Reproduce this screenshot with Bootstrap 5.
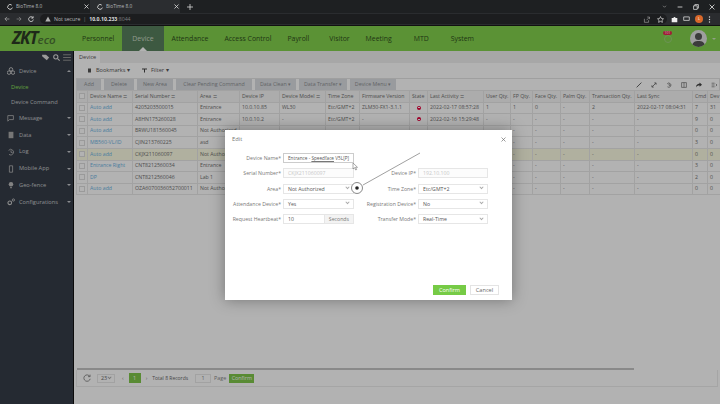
<!doctype html>
<html lang="en"><head><meta charset="utf-8"><title>BioTime 8.0</title>
<link rel="stylesheet" href="https://cdn.jsdelivr.net/npm/bootstrap@5.3.0/dist/css/bootstrap.min.css">
<style>
html,body{width:720px;height:404px;overflow:hidden;margin:0}
body{font-family:"Open Sans","Liberation Sans",sans-serif;font-size:5.6px;color:#555;background:#fff;position:relative;line-height:1.2}
.tabstrip{height:13px;background:#1e2022;color:#b5b7b9}
.browsertab{width:90px;height:13px;padding:0 1px 0 7px;font-size:4.8px;gap:3px}
.browsertab.on{background:#2b2d30}
.tabplus{margin-left:7px}
.urlbar{height:13px;background:#2a2c2f;color:#b8babc;border-bottom:1px solid #111}
.navbtns{width:40px;padding-left:4px;gap:6px;flex:none}
.omni{width:627px;height:10px;background:#1c1d1f;border-radius:5px;padding:0 3px 0 5px;font-size:5.2px;gap:3px;flex:none}
.omni b{color:#dedede;font-weight:700}
.omni i{font-style:normal;color:#7c7e80}
.ext{padding-left:4px;gap:5px}
.avatar-l{width:8px;height:8px;border-radius:50%;background:#d9682a;color:#fff;font-size:4px;line-height:8px;text-align:center}
.winctl{gap:10px;padding-right:5px}
.topnav{height:25px;background:#83d14c;color:#2e4f1e;font-size:6.9px}
.brand-box{width:74px;padding-left:12px;font-size:17px;font-weight:700;font-style:italic;color:#2c3b24;letter-spacing:-1px;line-height:25px;flex:none}
.brand-box em{font-size:11.5px;font-weight:600;letter-spacing:0;color:#4d7436}
.navitem{height:25px;line-height:25px;padding:0 8px;position:relative}
.navitem.act{background:#58805e;color:#d0dcca;padding:0 10px}
.navitem.act:after{content:"";position:absolute;left:50%;margin-left:-4px;bottom:0;border:4px solid transparent;border-top:0;border-bottom-color:#fff}
.sp1{width:4px}.sp2{width:6px}.sp3{width:2px}
.bellbox{position:relative;width:8px;height:8px;margin-right:18px;border:1.5px solid #9bd37a;border-radius:50%}
.bellbadge{position:absolute;left:-2px;top:-5px;background:#e8274e;color:#fff;font-size:3.5px;border-radius:3px;padding:0 1.5px}
.face{width:17px;height:17px;border-radius:50%;background:#e3e3e3;overflow:hidden;margin-right:5px}
.caretw{width:0;height:0;border:2px solid transparent;border-top-color:#cde6bd;margin-right:4px;margin-top:2px}
.shell{height:353px}
.sidebar{width:74px;background:#363d48;color:#c6c9cd;border-right:1px solid #111;flex:none;font-size:5.7px}
.sidetools{height:12px;padding-right:2px;gap:3px}
.sideitem{height:16.8px;padding-left:7px;gap:4px}
.sideitem svg{flex:none}
.sideitem span{flex:1}
.subitem{height:15px;padding-left:11px}
.subitem.on{color:#8fe05a}
.arrowd{width:0;height:0;border:2.3px solid transparent;border-top-color:#c6c9cd;margin:2px 2px 0 0}
.arrowu{width:0;height:0;border:2.3px solid transparent;border-bottom-color:#c6c9cd;margin:-2px 2px 0 0}
.mainarea{flex:1;min-width:0;background:#fff;overflow:hidden}
.crumbbar{height:12px;background:#f0f0f0}
.crumb{background:#fff;width:26px;height:12px;line-height:12px;padding-left:5px;font-size:5.6px}
.marks{height:15px;padding-left:13px;gap:12px;color:#555}
.tools{margin:0 0 0 2px;height:12px;border:1px solid #e4e4e4;border-width:1px 1px 0 1px}
.toolbtn{background:#dcdfe3;height:11px;line-height:11px;text-align:center;margin-right:3px;color:#8c8f92;font-size:5.3px;white-space:nowrap;flex:none}
.b1{width:24px}.b2{width:30px}.b3{width:36px}.b4{width:76px}.b5{width:41px}.b6{width:48px}.b7{width:46px}
.toolicons{margin-left:auto;gap:9px;padding-right:2px}
.gridbox{width:700px;margin-left:2px}
table.dtable{table-layout:fixed;width:648px;margin:0;font-size:5.2px;border-collapse:collapse}
.dtable th,.dtable td{height:11.6px;padding:0 2px;border:1px solid #e8e8e8;white-space:nowrap;overflow:hidden;font-weight:400;color:#707070;background:#fff;vertical-align:middle;line-height:1}
.dtable th{background:#f6f6f6;color:#707070}
.dtable a{color:#6cb4e4;text-decoration:none}
.dtable .hi td{background:#fdfde4}
.srt{color:#aaa}
.ck{display:block;width:6px;height:6px;margin:auto;border:1px solid #ddd;background:#fff}
.stop{display:block;width:4px;height:4px;border-radius:50%;background:#e5003d;margin:auto;position:relative}
.stop:after{content:"";position:absolute;left:1px;top:1.6px;width:2px;height:.8px;background:#fff}
.c1{width:11px}.c2{width:45px}.c3{width:65px}.c4{width:42px}.c5{width:40px}.c6{width:46px}.c7{width:34px}.c8{width:50px}.c9{width:18px}.c10{width:56px}.c11{width:27px}.c12{width:22px}.c13{width:28px}.c14{width:29px}.c15{width:45px}.c16{width:58px}.c17{width:15px}.c18{width:17px}
.spacer{height:173px}
.scrollline{height:2px;width:557px;margin-left:3px;background:#c4c4c4}
.pager{height:17px;width:642px;margin-left:2px;border:1px solid #ededed;border-top:0;padding-left:6px;font-size:5.4px;color:#888}
.sel23{width:18px;height:9px;border:1px solid #e8e8e8;margin:0 7px 0 6px;padding:0 3px;color:#666}
.page1{width:12px;height:10px;line-height:10px;text-align:center;color:#fff;background:#80c84b;margin:0 5px}
.totalrec{margin-left:5px;font-size:5px;color:#666}
.pginput{width:16px;height:9px;line-height:7px;border:1px solid #e8e8e8;text-align:center;margin:0 3px 0 7px}
.pgconfirm{background:#80c84b;color:#fff;width:25px;height:9px;line-height:9px;text-align:center;margin-left:3px}
.dim{position:absolute;left:0;right:0;top:26px;bottom:0;background:rgba(0,0,0,.3)}
.editbox{position:absolute;left:225px;top:130px;width:287px;height:170px;background:#fff;box-shadow:0 0 14px rgba(0,0,0,.35);display:flex;flex-direction:column;color:#666}
.edithead{height:18px;padding:0 6px 0 7px;font-size:5.8px;color:#777}
.fieldgrid{display:grid;grid-template-columns:58px 71px 64px 70px;row-gap:5.3px;padding:5px 0 0 0;font-size:5.2px}
.flabel{text-align:right;padding-right:2px;line-height:10px;white-space:nowrap;color:#777}
.fctl{height:10px;border:1px solid #e6e6e6;padding:0 4px;color:#555;background:#fff;display:flex;align-items:center;justify-content:space-between;white-space:nowrap;overflow:hidden;line-height:8px}
.fctl.focusx{border-color:#ccc;font-size:4.7px}
.fctl.off{background:#fcfcfc;color:#c8c8c8}
.fctl u{text-decoration-color:#777;text-underline-offset:1px}
.chev{width:3px;height:3px;border:solid #aaa;border-width:0 1px 1px 0;transform:rotate(45deg) translate(-1px,-1px)}
.unit{background:#f3f3f3;border-left:1px solid #e6e6e6;margin-right:-4px;height:8px;padding:0 4px;color:#777;line-height:8px}
.editfoot{margin-top:auto;height:17px;padding-right:13px;gap:4px;padding-bottom:3px}
.okbtn{width:33px;height:10px;line-height:10px;text-align:center;background:#76cb46;color:#fff;font-size:5.6px}
.nobtn{width:29px;height:10px;line-height:8px;text-align:center;border:1px solid #e4e4e4;color:#666;font-size:5.6px}
.annot{position:absolute;left:0;top:0;width:720px;height:404px;pointer-events:none}
</style></head><body>
<div class="tabstrip d-flex align-items-center">
 <div class="browsertab d-flex align-items-center"><svg width="6" height="6" viewBox="0 0 10 10"><path d="M8 2A4 4 0 1 0 9 6" fill="none" stroke="#ccc" stroke-width="1.6"/></svg><span class="flex-grow-1">BioTime 8.0</span><svg width="5" height="5" viewBox="0 0 10 10"><path d="M1 1l8 8M9 1l-8 8" stroke="#ddd" stroke-width="1.6"/></svg></div>
 <div class="browsertab on d-flex align-items-center"><svg width="6" height="6" viewBox="0 0 10 10"><path d="M8 2A4 4 0 1 0 9 6" fill="none" stroke="#ccc" stroke-width="1.6"/></svg><span class="flex-grow-1">BioTime 8.0</span><svg width="5" height="5" viewBox="0 0 10 10"><path d="M1 1l8 8M9 1l-8 8" stroke="#ddd" stroke-width="1.6"/></svg></div>
 <svg class="tabplus" width="6" height="6" viewBox="0 0 10 10"><path d="M5 0v10M0 5h10" stroke="#ddd" stroke-width="1.3"/></svg>
 <div class="winctl ms-auto d-flex align-items-center">
  <svg width="5" height="5" viewBox="0 0 10 10"><path d="M2 3.5l3 3 3-3" fill="none" stroke="#aaa" stroke-width="1.2"/></svg>
  <svg width="6" height="6" viewBox="0 0 10 10"><path d="M1 5h8" stroke="#ddd" stroke-width="1.4"/></svg>
  <svg width="6" height="6" viewBox="0 0 10 10"><path d="M1 3h6v6H1zM3 3V1h6v6H7" fill="none" stroke="#ddd" stroke-width="1.3"/></svg>
  <svg width="6" height="6" viewBox="0 0 10 10"><path d="M1 1l8 8M9 1l-8 8" stroke="#ddd" stroke-width="1.4"/></svg>
 </div>
</div>
<div class="urlbar d-flex align-items-center">
 <div class="navbtns d-flex align-items-center">
  <svg width="6" height="6" viewBox="0 0 10 10"><path d="M9 5H1.5M5 1.5L1.5 5 5 8.5" fill="none" stroke="#aaa" stroke-width="1.2"/></svg>
  <svg width="6" height="6" viewBox="0 0 10 10"><path d="M1 5h7.5M5 1.5L8.5 5 5 8.5" fill="none" stroke="#888" stroke-width="1.2"/></svg>
  <svg width="6" height="6" viewBox="0 0 10 10"><path d="M8 2.5A4 4 0 1 0 9 6M8.5 .5v3h-3" fill="none" stroke="#ddd" stroke-width="1.4"/></svg>
 </div>
 <div class="omni d-flex align-items-center"><svg width="6" height="6" viewBox="0 0 10 10"><path d="M5 1l4.5 8h-9z" fill="#b0b0b0"/></svg><span>Not secure</span><i>|</i><span><b>10.0.10.233</b><i>:8044</i></span>
  <svg class="ms-auto" width="7" height="7" viewBox="0 0 10 10"><path d="M2 4v5h6V6M5 6l4-4M6 1.5h3.3v3" fill="none" stroke="#999" stroke-width="1"/></svg>
  <svg class="ms-1" width="7" height="7" viewBox="0 0 10 10"><path d="M5 .8l1.3 2.8 3 .4-2.2 2.1.6 3L5 7.6 2.300 9.100l.6-3L.7 4l3-.4z" fill="none" stroke="#ddd" stroke-width="1"/></svg>
 </div>
 <div class="ext d-flex align-items-center">
  <svg width="7" height="7" viewBox="0 0 10 10"><path d="M1 3h2.500a1.500 1.500 0 0 1 3 0H9v6H1z" fill="#eee"/></svg>
  <svg width="7" height="6" viewBox="0 0 10 8"><path d="M1 1h8v5H1z" fill="none" stroke="#ccc" stroke-width="1.200"/></svg>
  <span class="avatar-l">L</span>
  <svg width="3" height="7" viewBox="0 0 3 10"><circle cx="1.500" cy="1.500" r="1" fill="#ddd"/><circle cx="1.500" cy="5" r="1" fill="#ddd"/><circle cx="1.500" cy="8.500" r="1" fill="#ddd"/></svg>
 </div>
</div>
<nav class="topnav d-flex align-items-center">
 <div class="brand-box">ZKT<em>eco</em></div>
 <div class="navitem">Personnel</div><div class="navitem act">Device</div><div class="navitem">Attendance</div><div class="navitem">Access Control</div><div class="navitem">Payroll</div><div class="sp1"></div><div class="navitem">Visitor</div><div class="navitem">Meeting</div><div class="sp2"></div><div class="navitem">MTD</div><div class="sp2"></div><div class="navitem">System</div>
 <div class="ms-auto bellbox"><span class="bellbadge">101</span></div>
 <div class="face"><svg width="17" height="17" viewBox="0 0 17 17"><circle cx="8.500" cy="6.500" r="3.500" fill="#555"/><path d="M2 17c0-5 3-6 6.500-6s6.500 1 6.500 6z" fill="#555"/></svg></div>
 <div class="caretw"></div>
</nav>
<div class="shell d-flex">
 <aside class="sidebar">
  <div class="sidetools d-flex align-items-center justify-content-end">
   <svg width="8" height="7" viewBox="0 0 10 9"><path d="M0 1h5l4 3.500L6 8 0 3z" fill="#ddd"/></svg>
   <svg width="7" height="7" viewBox="0 0 10 10"><circle cx="4" cy="4" r="3" fill="none" stroke="#ddd" stroke-width="1.500"/><path d="M6.500 6.500L9.500 9.500" stroke="#ddd" stroke-width="1.500"/></svg>
   <svg width="8" height="7" viewBox="0 0 10 9"><path d="M0 1h10M0 4.500h10M0 8h10" stroke="#999" stroke-width="1.200"/></svg>
  </div>
  <div class="sideitem d-flex align-items-center"><svg width="8" height="8" viewBox="0 0 10 10"><circle cx="5" cy="3" r="2.200" fill="none" stroke="#ddd"/><circle cx="2.500" cy="7" r="2.200" fill="none" stroke="#ddd"/><circle cx="7.500" cy="7" r="2.200" fill="none" stroke="#ddd"/></svg><span>Device</span><i class="arrowu"></i></div>
  <div class="subitem on d-flex align-items-center">Device</div>
  <div class="subitem d-flex align-items-center">Device Command</div>
  <div class="sideitem d-flex align-items-center"><svg width="8" height="8" viewBox="0 0 10 10"><path d="M1 2h7v5H3L1 9z" fill="none" stroke="#bbb"/></svg><span>Message</span><i class="arrowd"></i></div>
  <div class="sideitem d-flex align-items-center"><svg width="8" height="8" viewBox="0 0 10 10"><path d="M2 1h6v8H2z" fill="#aaa"/></svg><span>Data</span><i class="arrowd"></i></div>
  <div class="sideitem d-flex align-items-center"><svg width="8" height="8" viewBox="0 0 10 10"><path d="M2 3A3.500 3.500 0 1 1 2.500 8M5 3v2.500h2" fill="none" stroke="#bbb"/></svg><span>Log</span><i class="arrowd"></i></div>
  <div class="sideitem d-flex align-items-center"><svg width="8" height="8" viewBox="0 0 10 10"><path d="M3 1h4v8H3z" fill="none" stroke="#bbb"/></svg><span>Mobile App</span><i class="arrowd"></i></div>
  <div class="sideitem d-flex align-items-center"><svg width="8" height="8" viewBox="0 0 10 10"><circle cx="5" cy="4" r="2.800" fill="#bbb"/><path d="M4 7.500h2v1.500H4z" fill="#bbb"/></svg><span>Geo-fence</span><i class="arrowd"></i></div>
  <div class="sideitem d-flex align-items-center"><svg width="8" height="8" viewBox="0 0 10 10"><circle cx="3.500" cy="6" r="2.300" fill="none" stroke="#ccc" stroke-width="1.300"/><circle cx="8" cy="2.500" r="1.400" fill="none" stroke="#ccc"/></svg><span>Configurations</span><i class="arrowd"></i></div>
 </aside>
 <main class="mainarea">
  <div class="crumbbar"><div class="crumb">Device</div></div>
  <div class="marks d-flex align-items-center"><span class="d-flex align-items-center gap-1"><svg width="5" height="5" viewBox="0 0 10 10"><path d="M2 1h6v8H2z" fill="#555"/></svg>Bookmarks ▾</span><span class="d-flex align-items-center gap-1"><svg width="5" height="5" viewBox="0 0 10 10"><path d="M0 1h10v2H6v6H4V3H0z" fill="#444"/></svg>Filter ▾</span></div>
  <div class="tools d-flex align-items-center">
   <div class="toolbtn b1">Add</div><div class="toolbtn b2">Delete</div><div class="toolbtn b3">New Area</div><div class="toolbtn b4">Clear Pending Command</div><div class="toolbtn b5">Data Clean ▾</div><div class="toolbtn b6">Data Transfer ▾</div><div class="toolbtn b7">Device Menu ▾</div>
   <div class="toolicons d-flex align-items-center">
    <svg width="6" height="6" viewBox="0 0 10 10"><path d="M1 9L9 1" stroke="#555" stroke-width="1.500"/></svg>
    <svg width="6" height="6" viewBox="0 0 10 10"><path d="M2 8L8 2M5.500 1.500H8.500V4.500M1.500 5.500V8.500H4.500" fill="none" stroke="#555" stroke-width="1.200"/></svg>
    <svg width="6" height="6" viewBox="0 0 10 10"><path d="M2 3A3.500 3.500 0 1 1 2.500 8M5 3v2.500h2" fill="none" stroke="#555" stroke-width="1.100"/></svg>
    <svg width="6" height="6" viewBox="0 0 10 10"><path d="M1 1h8v8H1zM5 1v8" fill="none" stroke="#555"/></svg>
    <svg width="6" height="6" viewBox="0 0 10 10"><path d="M6 1l4 3.500L6 8V6C3 6 1 7 0 9c0-4 2-6 6-6.500z" fill="#444"/></svg>
    <svg width="6" height="6" viewBox="0 0 10 10"><path d="M1 2h5M1 5h5M1 8h5M8 3l2 2-2 2" fill="none" stroke="#555"/></svg>
   </div>
  </div>
  <div class="gridbox">
  <table class="table dtable"><colgroup><col class="c1"><col class="c2"><col class="c3"><col class="c4"><col class="c5"><col class="c6"><col class="c7"><col class="c8"><col class="c9"><col class="c10"><col class="c11"><col class="c12"><col class="c13"><col class="c14"><col class="c15"><col class="c16"><col class="c17"><col class="c18"></colgroup>
  <thead><tr><th><i class="ck"></i></th><th>Device Name <span class="srt">≑</span></th><th>Serial Number <span class="srt">≑</span></th><th>Area <span class="srt">≑</span></th><th>Device IP</th><th>Device Model <span class="srt">≑</span></th><th>Time Zone</th><th>Firmware Version</th><th>State</th><th>Last Activity <span class="srt">≑</span></th><th>User Qty.</th><th>FP Qty.</th><th>Face Qty.</th><th>Palm Qty.</th><th>Transaction Qty.</th><th>Last Sync</th><th>Cmd</th><th>Dev</th></tr></thead>
  <tbody>
  <tr><td><i class="ck"></i></td><td><a href="#">Auto add</a></td><td>4205203500015</td><td>Entrance</td><td>10.0.10.85</td><td>WL30</td><td>Etc/GMT+2</td><td>ZLM30-FX1-3.1.1</td><td><i class="stop"></i></td><td>2022-02-17 08:57:28</td><td>1</td><td>1</td><td>0</td><td>-</td><td>2</td><td>2022-02-17 08:04:31</td><td>7</td><td>31</td></tr>
  <tr><td><i class="ck"></i></td><td><a href="#">Auto add</a></td><td>A8HN175260028</td><td>Entrance</td><td>10.0.10.2</td><td>-</td><td>Etc/GMT+2</td><td>-</td><td><i class="stop"></i></td><td>2022-02-16 15:29:48</td><td>-</td><td>-</td><td>-</td><td>-</td><td>-</td><td>-</td><td>9</td><td>0</td></tr>
  <tr><td><i class="ck"></i></td><td><a href="#">Auto add</a></td><td>BRWU181560045</td><td>Not Authorized</td><td></td><td></td><td></td><td></td><td></td><td></td><td>-</td><td>-</td><td>-</td><td>-</td><td>-</td><td>-</td><td>0</td><td>0</td></tr>
  <tr><td><i class="ck"></i></td><td><a href="#">MB560-VL/ID</a></td><td>CJIN213760225</td><td>asd</td><td></td><td></td><td></td><td></td><td></td><td></td><td>-</td><td>-</td><td>-</td><td>-</td><td>-</td><td>-</td><td>3</td><td>0</td></tr>
  <tr class="hi"><td><i class="ck"></i></td><td><a href="#">Auto add</a></td><td>CKJX211060097</td><td>Not Authorized</td><td></td><td></td><td></td><td></td><td></td><td></td><td>-</td><td>-</td><td>-</td><td>-</td><td>-</td><td>-</td><td>0</td><td>0</td></tr>
  <tr><td><i class="ck"></i></td><td><a href="#">Entrance Right</a></td><td>CNT8212560034</td><td>Entrance</td><td></td><td></td><td></td><td></td><td></td><td></td><td>-</td><td>-</td><td>-</td><td>-</td><td>-</td><td>-</td><td>3</td><td>0</td></tr>
  <tr><td><i class="ck"></i></td><td><a href="#">DP</a></td><td>CNT8212560046</td><td>Lab 1</td><td></td><td></td><td></td><td></td><td></td><td></td><td>-</td><td>-</td><td>-</td><td>-</td><td>-</td><td>-</td><td>2</td><td>0</td></tr>
  <tr><td><i class="ck"></i></td><td><a href="#">Auto add</a></td><td>OZA6070036052700011</td><td>Not Authorized</td><td></td><td></td><td></td><td></td><td></td><td></td><td>-</td><td>-</td><td>-</td><td>-</td><td>-</td><td>-</td><td>0</td><td>0</td></tr>
  </tbody></table>
  </div>
  <div class="spacer"></div>
  <div class="scrollline"></div>
  <div class="pager d-flex align-items-center">
   <svg width="8" height="8" viewBox="0 0 10 10"><path d="M8.500 3A4 4 0 1 0 9 6M8.800 .8v2.500H6.300" fill="none" stroke="#777"/></svg>
   <div class="sel23 d-flex align-items-center justify-content-between">23 <span class="chev"></span></div>
   <span>‹</span><div class="page1">1</div><span>›</span>
   <span class="totalrec">Total 8 Records</span><div class="pginput">1</div><span>Page</span><div class="pgconfirm">Confirm</div>
  </div>
 </main>
</div>
<div class="dim"></div>
<div class="editbox">
 <div class="edithead d-flex align-items-center justify-content-between"><span>Edit</span><svg width="5" height="5" viewBox="0 0 10 10"><path d="M1 1l8 8M9 1l-8 8" stroke="#666" stroke-width="1.300"/></svg></div>
 <div class="fieldgrid">
  <div class="flabel">Device Name*</div><div class="fctl focusx"><span>Entrance - <u>Speedface</u> V5L[P]</span></div><div></div><div></div>
  <div class="flabel">Serial Number*</div><div class="fctl off">CKJX211060097</div><div class="flabel">Device IP*</div><div class="fctl off">192.10.100</div>
  <div class="flabel">Area*</div><div class="fctl">Not Authorized<i class="chev"></i></div><div class="flabel">Time Zone*</div><div class="fctl">Etc/GMT+2<i class="chev"></i></div>
  <div class="flabel">Attendance Device*</div><div class="fctl">Yes<i class="chev"></i></div><div class="flabel">Registration Device*</div><div class="fctl">No<i class="chev"></i></div>
  <div class="flabel">Request Heartbeat*</div><div class="fctl">10<span class="unit">Seconds</span></div><div class="flabel">Transfer Mode*</div><div class="fctl">Real-Time<i class="chev"></i></div>
 </div>
 <div class="editfoot d-flex justify-content-end align-items-center"><div class="okbtn">Confirm</div><div class="nobtn">Cancel</div></div>
</div>
<svg class="annot" viewBox="0 0 720 404"><path d="M363 185L420 153" stroke="#888" stroke-width=".8"/><circle cx="357" cy="188" r="5.500" fill="#fff" stroke="#555" stroke-width=".7"/><circle cx="357" cy="188" r="1.800" fill="#222"/><path d="M353 163v6l1.500-1.300 1.200 2.300 1-.5-1.200-2.200h2z" fill="#fff" stroke="#555" stroke-width=".5"/></svg>
</body></html>
